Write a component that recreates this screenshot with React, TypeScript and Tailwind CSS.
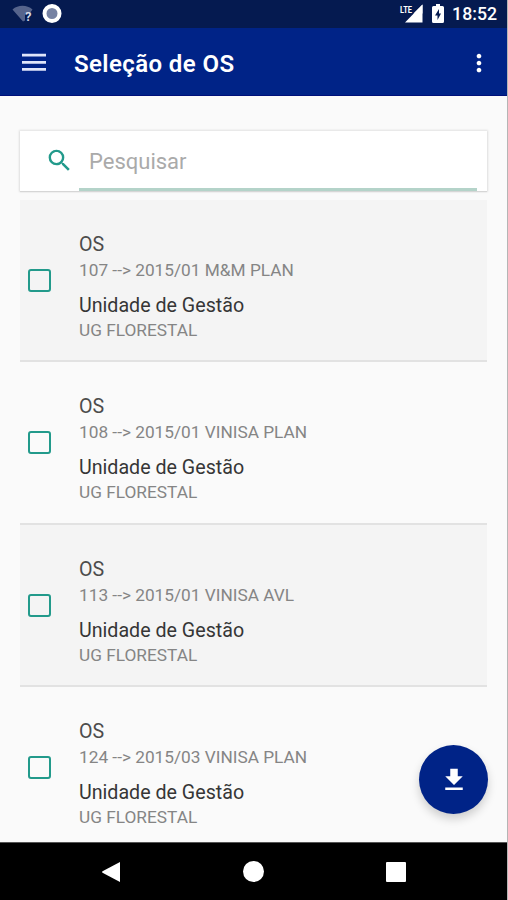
import React, { useState } from 'react';
import { MdFileDownload, MdMoreVert, MdSearch } from 'react-icons/md';

interface ServiceOrder {
  id: number;
  label: string;
  unit: string;
}

const ORDERS: ServiceOrder[] = [
  { id: 107, label: '107 --> 2015/01 M&M PLAN', unit: 'UG FLORESTAL' },
  { id: 108, label: '108 --> 2015/01 VINISA PLAN', unit: 'UG FLORESTAL' },
  { id: 113, label: '113 --> 2015/01 VINISA AVL', unit: 'UG FLORESTAL' },
  { id: 124, label: '124 --> 2015/03 VINISA PLAN', unit: 'UG FLORESTAL' },
];

const StatusBar: React.FC = () => (
  <div className="h-7 shrink-0 flex items-center justify-between bg-[#051a50] pl-3 pr-[10px] text-white">
    <div className="flex items-center gap-[9px]">
      <svg width="21" height="20" viewBox="0 0 21 20">
        <path d="M0.500 5.500C6 0.500 15 0.500 20.500 5.500L18 9h-5v7.500l-2 1z" fill="#56648c" />
        <text x="13" y="17" fontSize="13" fontWeight="700" fontFamily="Roboto" fill="#d5d9e6">?</text>
      </svg>
      <svg width="20" height="20" viewBox="0 0 20 20">
        <circle cx="10" cy="9.500" r="7.500" fill="#7682a3" stroke="#fff" strokeWidth="4" />
      </svg>
    </div>
    <div className="flex items-center">
      <svg width="24" height="20" viewBox="0 0 24 20">
        <path d="M23.500 0.500v18H6z" fill="#fff" />
        <path d="M0 0h14v9H0z" fill="#051a50" />
        <path d="M23.500 0.500v9h-9z" fill="#fff" />
        <text x="1" y="8.500" fontSize="9.500" fontWeight="700" fontFamily="Roboto" fill="#fff" textLength="12" lengthAdjust="spacingAndGlyphs">LTE</text>
      </svg>
      <svg className="ml-[9px]" width="12" height="20" viewBox="0 0 12 20">
        <path d="M1.500 2H4V0h4v2h2.500Q12 2 12 3.500v14q0 1.500-1.500 1.500h-9Q0 19 0 17.500v-14Q0 2 1.500 2z" fill="#fff" />
        <path d="M7 5 3 11.500h2.500V16L9 9.500H7z" fill="#051a50" />
      </svg>
      <span className="ml-2 text-[17.700px] leading-7 font-medium">18:52</span>
    </div>
  </div>
);

const Header: React.FC = () => (
  <header className="h-[68px] shrink-0 flex items-center bg-[#002387] border-b border-[#00107a] pl-[22px] pr-3.5 text-white">
    <button aria-label="Menu">
      <svg width="24" height="18" viewBox="0 0 24 18">
        <path d="M0 2.200h24M0 9.300h24M0 16.400h24" stroke="#dfe5fa" strokeWidth="2.800" />
      </svg>
    </button>
    <h1 className="ml-7 flex-1 pt-1 text-[24px] leading-7 font-semibold tracking-[0.400px]">Seleção de OS</h1>
    <button aria-label="Mais">
      <MdMoreVert className="mt-0.5 size-[28px]" />
    </button>
  </header>
);

const OrderRow: React.FC<{ order: ServiceOrder; checked: boolean; shaded: boolean; onToggle: () => void }> = ({ order, checked, shaded, onToggle }) => (
  <li className={`h-[162.300px] shrink-0 flex border-b-2 border-[#e2e2e2] ${shaded ? 'bg-[#f4f4f4]' : 'bg-[#fafafa]'}`}>
    <button
      role="checkbox"
      aria-checked={checked}
      onClick={onToggle}
      className={`ml-2 mt-[69px] size-[23px] shrink-0 rounded-[3px] border-2 border-[#229a8b] ${checked ? 'bg-[#229a8b]' : ''}`}
    />
    <div className="ml-7 pt-8">
      <p className="text-[19.650px] leading-[26px] text-[#4c4c4c]">OS</p>
      <p className="text-[17.250px] leading-[25px] text-[#858585]">{order.label}</p>
      <p className="mt-[10px] text-[19.650px] leading-[26px] text-[#363636]">Unidade de Gestão</p>
      <p className="-mt-px text-[17.250px] leading-[25px] text-[#858585]">{order.unit}</p>
    </div>
  </li>
);

const App: React.FC = () => {
  const [query, setQuery] = useState('');
  const [selected, setSelected] = useState<number[]>([]);

  const toggle = (id: number) => {
    setSelected(prev => prev.includes(id) ? prev.filter(x => x !== id) : [...prev, id]);
  };

  return (
    <div className="h-[900px] w-[508px] flex bg-[#b5b5b5] overflow-hidden font-[Roboto,sans-serif]">
      <div className="relative w-[507px] flex flex-col bg-[#fafafa]">
        <StatusBar />
        <Header />

        <main className="flex-1 min-h-0 overflow-hidden flex flex-col px-5 pt-[35px]">
          <div className="h-[60px] w-[467px] shrink-0 flex bg-white pl-[25px] pr-[10px] shadow-[0_0_2px_1px_rgba(0,0,0,0.1),0_1px_1px_rgba(0,0,0,0.08)]">
            <MdSearch className="mt-[15px] size-[29px] shrink-0 text-[#229a8b]" />
            <input
              value={query}
              onChange={e => setQuery(e.target.value)}
              placeholder="Pesquisar"
              className="ml-[5px] flex-1 min-w-0 border-b-[3px] border-[#b4d3c9] pl-2.5 pt-[3px] text-[22px] outline-none placeholder:text-[#aaa]"
            />
          </div>

          <ul className="mt-[9px] w-[467px] flex flex-col">
            {ORDERS.map((order, i) => (
              <OrderRow
                key={order.id}
                order={order}
                shaded={i % 2 === 0}
                checked={selected.includes(order.id)}
                onToggle={() => toggle(order.id)}
              />
            ))}
          </ul>
        </main>

        <button aria-label="Baixar" className="absolute left-[419px] top-[745px] size-[69px] flex items-center justify-center rounded-full bg-[#002387] text-white shadow-[0_5px_10px_rgba(0,0,0,0.18)]">
          <MdFileDownload className="size-[30px]" />
        </button>

        <nav className="h-[58px] shrink-0 flex items-center justify-between bg-black border-t border-[#555] pl-[101px] pr-[101px]">
          <svg width="20" height="22" viewBox="0 0 20 22"><path d="M19 1v20L1.500 11.800q-1-.8 0-1.600z" fill="#fff" /></svg>
          <div className="size-[21px] rounded-full bg-white" />
          <div className="size-5 rounded-[1px] bg-white" />
        </nav>
      </div>
    </div>
  );
};

export default App;
